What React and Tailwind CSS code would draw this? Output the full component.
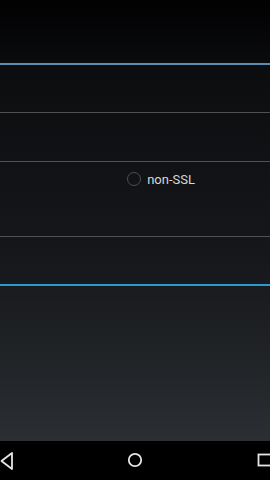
export default function App() {
  return (
    <div className="w-[270px] h-[480px] flex flex-col overflow-hidden bg-black font-['Roboto',sans-serif]">
      {/* top bar area */}
      <div className="h-[63px] bg-gradient-to-b from-[#020203] to-[#0b0c0e]" />
      <div className="h-[2px] bg-[#5b8db3]" />

      {/* content */}
      <div className="flex flex-col h-[376px] bg-gradient-to-b from-[#0c0d0f] via-[#15171a] to-[#2b2e32]">
        <div className="h-[48px] border-b border-[#505153]" />
        <div className="h-[49px] border-b border-[#505153]" />
        <div className="h-[75px] border-b border-[#505153] flex items-start justify-end pr-[75px] pt-[10px]">
          <div className="flex items-center gap-[6px]">
            <span className="w-[14px] h-[14px] rounded-full border-[1.5px] border-[#4d4f52]" />
            <span className="text-[13px] text-[#d6d7d9] leading-none">non-SSL</span>
          </div>
        </div>
        <div className="h-[47px]" />
        <div className="h-[2px] bg-[#2c9ad1]" />
        <div className="flex-1" />
      </div>

      {/* nav bar */}
      <div className="h-[39px] bg-black relative">
        <svg className="absolute left-0 top-[10px]" width="14" height="20" viewBox="0 0 14 20">
          <path d="M12 2 L1.5 10 L12 18 Z" fill="none" stroke="#e6e6e6" strokeWidth="1.8" strokeLinejoin="round" />
        </svg>
        <svg className="absolute left-[127px] top-[11px]" width="16" height="16" viewBox="0 0 16 16">
          <circle cx="8" cy="8" r="6.2" fill="none" stroke="#e6e6e6" strokeWidth="1.8" />
        </svg>
        <svg className="absolute left-[257px] top-[12px]" width="14" height="14" viewBox="0 0 14 14">
          <rect x="1.5" y="1.5" width="14" height="11" fill="none" stroke="#e6e6e6" strokeWidth="1.8" />
        </svg>
      </div>
    </div>
  );
}
